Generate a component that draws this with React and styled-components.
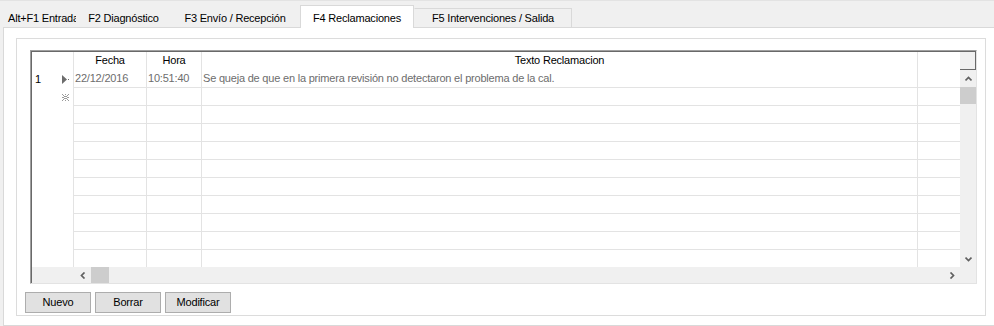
import React from 'react';
import styled, { createGlobalStyle } from 'styled-components';

const GlobalStyle = createGlobalStyle`
  html, body { margin: 0; padding: 0; background: #f0f0f0; }
  body {
    font-family: "Liberation Sans", Arial, sans-serif;
    font-size: 11px;
    letter-spacing: -0.2px;
    color: #000;
  }
  * { box-sizing: border-box; }
`;

const Window = styled.div`
  width: 994px;
  height: 326px;
  overflow: hidden;
  background: #f0f0f0;
  display: flex;
  flex-direction: column;
`;

const TabStrip = styled.div`
  height: 27px;
  border-top: 1px solid #e3e3e3;
  display: flex;
  align-items: flex-end;
  position: relative;
  z-index: 1;
`;

const Tab = styled.div`
  flex: none;
  width: ${p => p.$w}px;
  height: ${p => (p.$active ? 23 : 19)}px;
  margin-bottom: ${p => (p.$active ? -1 : 0)}px;
  padding-top: ${p => (p.$active ? 6 : 3)}px;
  padding-left: ${p => (p.$clip ? 7 : 0)}px;
  text-align: ${p => (p.$clip ? 'left' : 'center')};
  line-height: 13px;
  white-space: nowrap;
  overflow: hidden;
  background: ${p => (p.$active ? '#fff' : '#f0f0f0')};
  border: 1px solid ${p => (p.$bordered || p.$active ? '#d9d9d9' : 'transparent')};
  border-bottom: none;
  border-left-color: ${p => (p.$noLeft ? 'transparent' : undefined)};
`;

const Panel = styled.div`
  margin-left: 3px;
  width: 1000px;
  height: 299px;
  border: 1px solid #d9d9d9;
  border-right: none;
  background: #fff;
  padding: 10px 0 0 12px;
`;

const GroupBox = styled.div`
  width: 970px;
  height: 278px;
  border: 1px solid #dcdcdc;
  padding: 11px 0 0 8px;
`;

const GridOuter = styled.div`
  margin-left: 5px;
  width: 947px;
  height: 234px;
  border: 1px solid;
  border-color: #a0a0a0 #e3e3e3 #e3e3e3 #a0a0a0;
`;

const GridInner = styled.div`
  width: 945px;
  height: 232px;
  border-top: 1px solid #696969;
  border-left: 1px solid #696969;
  display: flex;
  flex-direction: column;
  background: #fff;
`;

const GridBody = styled.div`
  display: flex;
  height: 215px;
`;

const Columns = styled.div`
  width: 928px;
  overflow: hidden;
`;

const Row = styled.div`
  display: grid;
  grid-template-columns: 42px 73px 55px 716px 42px;
  height: ${p => p.$h || 18}px;
`;

const Cell = styled.div`
  border-right: ${p => (p.$last ? 'none' : '1px solid #e3e3e3')};
  border-bottom: ${p => (p.$line ? '1px solid #e3e3e3' : 'none')};
  padding-left: ${p => (p.$center ? 0 : 1)}px;
  text-align: ${p => (p.$center ? 'center' : 'left')};
  color: ${p => (p.$muted ? '#6d6d6d' : '#000')};
  line-height: 17px;
  white-space: nowrap;
  overflow: hidden;
`;

const RowHead = styled.div`
  border-right: 1px solid #e3e3e3;
  display: flex;
  align-items: center;
  justify-content: space-between;
  padding: 0 3px 0 3px;
  line-height: 17px;
`;

const VScroll = styled.div`
  width: 16px;
  display: flex;
  flex-direction: column;
  background: #f0f0f0;
`;

const Corner = styled.div`
  height: 18px;
  background: #f0f0f0;
  border-right: 1px solid #696969;
  border-bottom: 1px solid #696969;
`;

const ScrollBtn = styled.div`
  flex: none;
  width: ${p => (p.$horizontal ? 17 : 16)}px;
  height: ${p => (p.$horizontal ? 16 : 17)}px;
  display: flex;
  align-items: center;
  justify-content: center;
`;

const Thumb = styled.div`
  flex: none;
  background: #cdcdcd;
  width: ${p => (p.$horizontal ? '18px' : '16px')};
  height: ${p => (p.$horizontal ? '16px' : '17px')};
`;

const Track = styled.div`
  flex: 1;
`;

const HScroll = styled.div`
  height: 16px;
  display: flex;
  background: #f0f0f0;
`;

const Filler = styled.div`
  flex: none;
  width: ${p => p.$w}px;
`;

const ButtonRow = styled.div`
  display: flex;
  gap: 4px;
  margin-top: 8px;
`;

const Button = styled.button`
  width: 66px;
  height: 21px;
  border: 1px solid #adadad;
  background: #e1e1e1;
  font-family: "Liberation Sans", Arial, sans-serif;
  font-size: 11px;
  letter-spacing: -0.2px;
  color: #000;
  padding: 0;
  line-height: 19px;
`;

const Chevron = ({ dir }) => {
  const paths = {
    up: 'M0.5 4.5 L3.5 1.5 L6.5 4.5',
    down: 'M0.5 1.5 L3.5 4.5 L6.5 1.5',
    left: 'M4.5 0.5 L1.5 3.5 L4.5 6.5',
    right: 'M1.5 0.5 L4.5 3.5 L1.5 6.5',
  };
  const vertical = dir === 'up' || dir === 'down';
  return (
    <svg width={vertical ? 7 : 6} height={vertical ? 6 : 7} viewBox={vertical ? '0 0 7 6' : '0 0 6 7'}>
      <path d={paths[dir]} stroke="#606060" strokeWidth="1.7" fill="none" />
    </svg>
  );
};

const CurrentRowIcon = () => (
  <svg width="8" height="9" viewBox="0 0 8 9">
    <path d="M0 0 L5 4.5 L0 9 Z" fill="#6d6d6d" />
    <rect x="6" y="4" width="1" height="1" fill="#6d6d6d" />
  </svg>
);

const NewRowIcon = () => {
  const dots = [
    [0, 0], [3, 0], [6, 0],
    [1, 1], [5, 1],
    [2, 2], [3, 2], [4, 2],
    [0, 3], [1, 3], [5, 3], [6, 3],
    [2, 4], [3, 4], [4, 4],
    [1, 5], [5, 5],
    [0, 6], [3, 6], [6, 6],
  ];
  return (
    <svg width="7" height="7" viewBox="0 0 7 7" style={{ marginRight: 1 }}>
      {dots.map(([x, y]) => (
        <rect key={`${x}-${y}`} x={x} y={y} width="1" height="1" fill="#9a9a9a" />
      ))}
    </svg>
  );
};

const tabs = [
  { label: 'Alt+F1 Entrada', w: 77, clip: true },
  { label: 'F2 Diagnóstico', w: 93 },
  { label: 'F3 Envío / Recepción', w: 130 },
  { label: 'F4 Reclamaciones', w: 114, active: true },
  { label: 'F5 Intervenciones / Salida', w: 158, bordered: true, noLeft: true },
];

const EmptyRow = ({ h, line = true }) => (
  <Row $h={h}>
    <RowHead />
    <Cell $line={line} />
    <Cell $line={line} />
    <Cell $line={line} />
    <Cell $line={line} $last />
  </Row>
);

export default function App() {
  const blanks = Array.from({ length: 9 });
  return (
    <>
      <GlobalStyle />
      <Window>
        <TabStrip>
          {tabs.map(t => (
            <Tab
              key={t.label}
              $w={t.w}
              $clip={t.clip}
              $active={t.active}
              $bordered={t.bordered}
              $noLeft={t.noLeft}
            >
              {t.label}
            </Tab>
          ))}
        </TabStrip>
        <Panel>
          <GroupBox>
            <GridOuter>
              <GridInner>
                <GridBody>
                  <Columns>
                    <Row>
                      <RowHead />
                      <Cell $center>Fecha</Cell>
                      <Cell $center>Hora</Cell>
                      <Cell $center>Texto Reclamacion</Cell>
                      <Cell $last />
                    </Row>
                    <Row>
                      <RowHead>
                        <span>1</span>
                        <CurrentRowIcon />
                      </RowHead>
                      <Cell $line $muted>22/12/2016</Cell>
                      <Cell $line $muted>10:51:40</Cell>
                      <Cell $line $muted>
                        Se queja de que en la primera revisión no detectaron el problema de la cal.
                      </Cell>
                      <Cell $line $last />
                    </Row>
                    <Row>
                      <RowHead>
                        <span />
                        <NewRowIcon />
                      </RowHead>
                      <Cell $line />
                      <Cell $line />
                      <Cell $line />
                      <Cell $line $last />
                    </Row>
                    {blanks.map((_, i) => (
                      <EmptyRow key={i} h={i === 8 ? 17 : 18} line={i !== 8} />
                    ))}
                  </Columns>
                  <VScroll>
                    <Corner />
                    <ScrollBtn>
                      <Chevron dir="up" />
                    </ScrollBtn>
                    <Thumb />
                    <Track />
                    <ScrollBtn>
                      <Chevron dir="down" />
                    </ScrollBtn>
                  </VScroll>
                </GridBody>
                <HScroll>
                  <Filler $w={42} />
                  <ScrollBtn $horizontal>
                    <Chevron dir="left" />
                  </ScrollBtn>
                  <Thumb $horizontal />
                  <Track />
                  <ScrollBtn $horizontal>
                    <Chevron dir="right" />
                  </ScrollBtn>
                  <Filler $w={16} />
                </HScroll>
              </GridInner>
            </GridOuter>
            <ButtonRow>
              <Button>Nuevo</Button>
              <Button>Borrar</Button>
              <Button>Modificar</Button>
            </ButtonRow>
          </GroupBox>
        </Panel>
      </Window>
    </>
  );
}
